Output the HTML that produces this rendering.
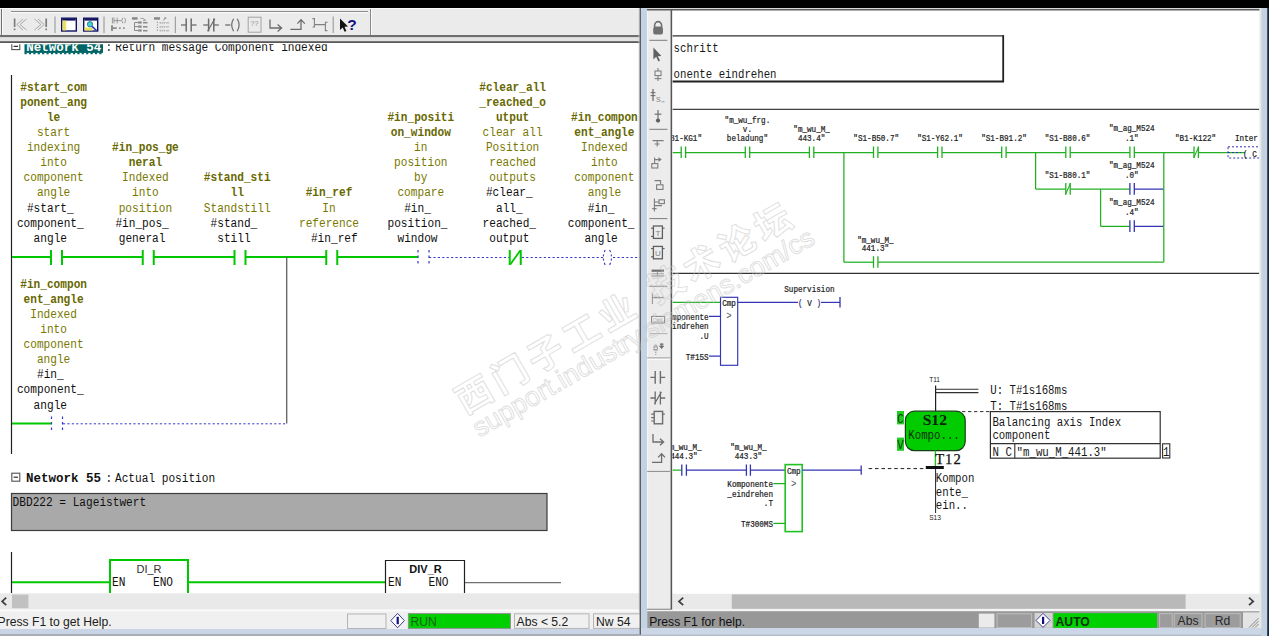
<!DOCTYPE html>
<html lang="en"><head><meta charset="utf-8"><title>STEP 7 monitor</title>
<style>
html,body{margin:0;padding:0;background:#fff;}
body{width:1269px;height:636px;overflow:hidden;}
svg{display:block;}
text{white-space:pre;}
.m11{font-family:"Liberation Mono",monospace;font-size:11.13px;}
.m107{font-family:"Liberation Mono",monospace;font-size:10.73px;}
.m76{font-family:"Liberation Mono",monospace;font-size:7.63px;stroke:#282828;stroke-width:0.2px;}
.m9{font-family:"Liberation Mono",monospace;font-size:9px;}
.b{font-weight:bold;}
.s11{font-family:"Liberation Sans",sans-serif;font-size:11px;}
.s8{font-family:"Liberation Sans",sans-serif;font-size:8px;}
.s9{font-family:"Liberation Sans",sans-serif;font-size:9.5px;}
.s7{font-family:"Liberation Sans",sans-serif;font-size:6.6px;}
.st{font-family:"Liberation Sans",sans-serif;font-size:12.15px;}
.tiny{font-family:"Liberation Sans",sans-serif;font-size:6.4px;}
.tiny2{font-family:"Liberation Sans",sans-serif;font-size:7px;}
.tiny3{font-family:"Liberation Sans",sans-serif;font-size:5.4px;}
.helpq{font-family:"Liberation Sans",sans-serif;font-size:15.5px;font-weight:bold;}
.ser15{font-family:"Liberation Serif",serif;font-size:15.6px;}
.ser14{font-family:"Liberation Serif",serif;font-size:14.6px;}
.wmc{font-family:"Liberation Sans","Noto Sans CJK SC",sans-serif;font-size:36px;font-weight:bold;}
.wml{font-family:"Liberation Sans",sans-serif;font-size:26.9px;}
</style></head>
<body>
<svg width="1269" height="636" viewBox="0 0 1269 636">
<rect x="0" y="0" width="1269" height="8" fill="#000000" />
<rect x="0" y="8" width="640" height="28" fill="#ebebeb" />
<line x1="0" y1="8.5" x2="640" y2="8.5" stroke="#f8f8f8" stroke-width="1" />
<line x1="1.5" y1="9" x2="1.5" y2="35" stroke="#707070" stroke-width="1" />
<line x1="2.5" y1="9" x2="2.5" y2="35" stroke="#fbfbfb" stroke-width="1" />
<line x1="11" y1="11.5" x2="368" y2="11.5" stroke="#8c8c8c" stroke-width="1" />
<line x1="11" y1="12.5" x2="368" y2="12.5" stroke="#fafafa" stroke-width="1" />
<line x1="370.5" y1="9" x2="370.5" y2="35" stroke="#8a8a8a" stroke-width="1" />
<line x1="371.5" y1="9" x2="371.5" y2="35" stroke="#fafafa" stroke-width="1" />
<rect x="0" y="35" width="640" height="2.4" fill="#6e6e6e" />
<rect x="0" y="37.4" width="640" height="3.8" fill="#e2e2e2" />
<rect x="0" y="41.2" width="640" height="1.8" fill="#585858" />
<line x1="14.6" y1="18.5" x2="14.6" y2="27" stroke="#7c7c7c" stroke-width="1.7" />
<line x1="14.6" y1="28.5" x2="14.6" y2="30.2" stroke="#7c7c7c" stroke-width="1.7" />
<line x1="46.2" y1="18.5" x2="46.2" y2="27" stroke="#7c7c7c" stroke-width="1.7" />
<line x1="46.2" y1="28.5" x2="46.2" y2="30.2" stroke="#7c7c7c" stroke-width="1.7" />
<path d="M26.5 19 L20 24.5 L26.5 30 M23 19 L16.8 24.5 L23 30" stroke="#a0a0a0" fill="none" stroke-width="0.9" />
<path d="M34.5 19 L41 24.5 L34.5 30 M38 19 L44.2 24.5 L38 30" stroke="#a0a0a0" fill="none" stroke-width="0.9" />
<line x1="55" y1="16.5" x2="55" y2="33" stroke="#909090" stroke-width="1" />
<rect x="61.7" y="18.2" width="14.6" height="12.8" fill="#ffffff" stroke="#101060" stroke-width="1.4" />
<rect x="62.4" y="18.6" width="13.2" height="2" fill="#101060" />
<rect x="62.6" y="20.6" width="3.6" height="9.8" fill="#e8e060" />
<rect x="83.7" y="18.2" width="14" height="12.8" fill="#ffffff" stroke="#101060" stroke-width="1.4" />
<rect x="84.4" y="18.6" width="12.6" height="2" fill="#101060" />
<rect x="84.6" y="27.6" width="8" height="3" fill="#e8e060" />
<circle cx="90" cy="24.3" r="2.7" fill="#40d0d0" stroke="#306080" stroke-width="0.8"/>
<line x1="92" y1="26.3" x2="96.5" y2="30.5" stroke="#2040c0" stroke-width="1.6" />
<line x1="104" y1="16.5" x2="104" y2="33" stroke="#909090" stroke-width="1" />
<path d="M112.4 17.6 V23.4 M114 17.6 V23.4 M117.2 17.6 V23.4 M114 20.6 H121 M122.8 17.8 Q120.8 20.5 122.8 23.2 M124.6 17.8 Q126.6 20.5 124.6 23.2" stroke="#8e8e8e" fill="none" stroke-width="0.9" />
<line x1="112" y1="25.2" x2="112" y2="31" stroke="#8a8a8a" stroke-width="1.9" />
<line x1="112.6" y1="28.1" x2="116.8" y2="28.1" stroke="#8a8a8a" stroke-width="1.7" />
<rect x="119" y="27.4" width="1.8" height="1.5" fill="#8a8a8a" />
<rect x="123" y="27.4" width="1.8" height="1.5" fill="#8a8a8a" />
<rect x="132" y="17.2" width="5.6" height="2.5" fill="#8a8a8a" />
<path d="M140.4 18.4 H143 L145.6 20.2 M143 20.4 H146" stroke="#9a9a9a" fill="none" stroke-width="0.9" />
<path d="M138 22.5 H134.5 V30.5 H138 M134.5 26.6 H138" stroke="#8a8a8a" fill="none" stroke-width="1" />
<rect x="138.1" y="21.4" width="3.6" height="2.2" fill="#8a8a8a" />
<line x1="143" y1="22.7" x2="147.5" y2="22.7" stroke="#8a8a8a" stroke-width="1.5" />
<rect x="138.1" y="25.5" width="3.6" height="2.2" fill="#8a8a8a" />
<line x1="143" y1="26.8" x2="147.5" y2="26.8" stroke="#8a8a8a" stroke-width="1.5" />
<rect x="138.1" y="29.4" width="3.6" height="2.2" fill="#8a8a8a" />
<line x1="143" y1="30.7" x2="147.5" y2="30.7" stroke="#8a8a8a" stroke-width="1.5" />
<rect x="154" y="17.2" width="6" height="2.5" fill="#8a8a8a" />
<path d="M163.4 20.4 L165.8 17.8 M164 18 H166.4" stroke="#8a8a8a" fill="none" stroke-width="1" />
<line x1="157.4" y1="21.8" x2="157.4" y2="31.4" stroke="#909090" stroke-width="1.1" stroke-dasharray="1.1 1.5" />
<line x1="159.6" y1="22.8" x2="165.4" y2="22.8" stroke="#b0b0b0" stroke-width="1.8" stroke-dasharray="1.3 0.7" />
<path d="M165.6 22.0 L166.8 23.6 L168 22.0 L169 23.6" stroke="#a8a8a8" fill="none" stroke-width="0.8" />
<line x1="159.6" y1="26.8" x2="165.4" y2="26.8" stroke="#b0b0b0" stroke-width="1.8" stroke-dasharray="1.3 0.7" />
<path d="M165.6 26.0 L166.8 27.6 L168 26.0 L169 27.6" stroke="#a8a8a8" fill="none" stroke-width="0.8" />
<line x1="159.6" y1="30.7" x2="165.4" y2="30.7" stroke="#b0b0b0" stroke-width="1.8" stroke-dasharray="1.3 0.7" />
<path d="M165.6 29.9 L166.8 31.5 L168 29.9 L169 31.5" stroke="#a8a8a8" fill="none" stroke-width="0.8" />
<line x1="175.3" y1="16.5" x2="175.3" y2="33" stroke="#909090" stroke-width="1" />
<line x1="181" y1="25" x2="186.2" y2="25" stroke="#6c6c6c" stroke-width="1.3" />
<line x1="186.2" y1="18.6" x2="186.2" y2="31.4" stroke="#6c6c6c" stroke-width="1.5" />
<line x1="191.2" y1="18.6" x2="191.2" y2="31.4" stroke="#6c6c6c" stroke-width="1.5" />
<line x1="191.2" y1="25" x2="196.6" y2="25" stroke="#6c6c6c" stroke-width="1.3" />
<line x1="203.3" y1="25" x2="208.6" y2="25" stroke="#6c6c6c" stroke-width="1.3" />
<line x1="208.6" y1="18.6" x2="208.6" y2="31.4" stroke="#6c6c6c" stroke-width="1.5" />
<line x1="213.8" y1="18.6" x2="213.8" y2="31.4" stroke="#6c6c6c" stroke-width="1.5" />
<line x1="213.8" y1="25" x2="218.8" y2="25" stroke="#6c6c6c" stroke-width="1.3" />
<line x1="207.6" y1="31.2" x2="214.8" y2="18.8" stroke="#6c6c6c" stroke-width="1.2" />
<line x1="225.2" y1="25" x2="230.4" y2="25" stroke="#6c6c6c" stroke-width="1.3" />
<path d="M233.6 18.8 Q229.8 25 233.6 31.2 M237.2 18.8 Q241 25 237.2 31.2" stroke="#6c6c6c" fill="none" stroke-width="1.2" />
<rect x="248.2" y="17.2" width="12.8" height="15" fill="none" stroke="#a4a4a4" stroke-width="1" />
<text x="254.5" y="26" class="tiny2" text-anchor="middle" fill="#909090" >??</text>
<path d="M270 19.4 V28 H281.4 M277.6 24.6 L281.6 28 L277.6 31.4" stroke="#6c6c6c" fill="none" stroke-width="1.3" />
<path d="M290.4 29.4 H301 V20.4 M297.4 23.6 L301 19.6 L304.8 23.6" stroke="#6c6c6c" fill="none" stroke-width="1.3" />
<path d="M312.4 18.6 H314.4 V27 H312.6 M314.4 24.6 H325.4 M327.6 22.2 H325.4 V30.6 H327.4" stroke="#808080" fill="none" stroke-width="1.1" />
<line x1="333.2" y1="16.5" x2="333.2" y2="33" stroke="#909090" stroke-width="1" />
<path d="M340 18.6 V30 L342.7 27.5 L344.6 31.8 L346.4 31 L344.5 26.8 L348 26.6 Z" stroke="none" fill="#101010" stroke-width="1" />
<text x="347.2" y="30" class="helpq" fill="#101080" >?</text>
<rect x="0" y="43" width="640" height="550.5" fill="#ffffff" />
<clipPath id="cl1"><rect x="0" y="44.2" width="640" height="30"/></clipPath>
<g clip-path="url(#cl1)">
<rect x="11.8" y="40.6" width="8" height="9" fill="#ffffff" stroke="#505050" stroke-width="1.1" />
<line x1="13.6" y1="46.4" x2="18" y2="46.4" stroke="#303030" stroke-width="1.2" />
<rect x="24.5" y="40" width="78.5" height="12.9" fill="#006464" />
<line x1="24.5" y1="53.4" x2="103" y2="53.4" stroke="#006464" stroke-width="1.6" stroke-dasharray="2.2 2.2" />
<text transform="translate(26.2,50.9) scale(1,1.16)" class="m11 b" fill="#ffffff" textLength="75" lengthAdjust="spacingAndGlyphs">Network 54</text>
<text transform="translate(105.6,50.9) scale(1,1.16)" class="m11" fill="#101010" >:</text>
<text transform="translate(115.3,50.9) scale(1,1.16)" class="m11" fill="#101010" textLength="212.4">Return message Component indexed</text>
</g>
<line x1="11.5" y1="75" x2="11.5" y2="454" stroke="#202020" stroke-width="1.2" />
<text transform="translate(53.6,90.6) scale(1,1.16)" class="m11 b" text-anchor="middle" fill="#686800" >#start_com</text>
<text transform="translate(53.6,105.7) scale(1,1.16)" class="m11 b" text-anchor="middle" fill="#686800" >ponent_ang</text>
<text transform="translate(53.6,120.8) scale(1,1.16)" class="m11 b" text-anchor="middle" fill="#686800" >le</text>
<text transform="translate(53.6,135.9) scale(1,1.16)" class="m11" text-anchor="middle" fill="#787800" >start</text>
<text transform="translate(53.6,151.0) scale(1,1.16)" class="m11" text-anchor="middle" fill="#787800" >indexing</text>
<text transform="translate(53.6,166.1) scale(1,1.16)" class="m11" text-anchor="middle" fill="#787800" >into</text>
<text transform="translate(53.6,181.3) scale(1,1.16)" class="m11" text-anchor="middle" fill="#787800" >component</text>
<text transform="translate(53.6,196.4) scale(1,1.16)" class="m11" text-anchor="middle" fill="#787800" >angle</text>
<text transform="translate(50.3,211.5) scale(1,1.16)" class="m11" text-anchor="middle" fill="#101010" >#start_</text>
<text transform="translate(50.3,226.6) scale(1,1.16)" class="m11" text-anchor="middle" fill="#101010" >component_</text>
<text transform="translate(50.3,241.7) scale(1,1.16)" class="m11" text-anchor="middle" fill="#101010" >angle</text>
<text transform="translate(145.4,151.0) scale(1,1.16)" class="m11 b" text-anchor="middle" fill="#686800" >#in_pos_ge</text>
<text transform="translate(145.4,166.1) scale(1,1.16)" class="m11 b" text-anchor="middle" fill="#686800" >neral</text>
<text transform="translate(145.4,181.3) scale(1,1.16)" class="m11" text-anchor="middle" fill="#787800" >Indexed</text>
<text transform="translate(145.4,196.4) scale(1,1.16)" class="m11" text-anchor="middle" fill="#787800" >into</text>
<text transform="translate(145.4,211.5) scale(1,1.16)" class="m11" text-anchor="middle" fill="#787800" >position</text>
<text transform="translate(142.1,226.6) scale(1,1.16)" class="m11" text-anchor="middle" fill="#101010" >#in_pos_</text>
<text transform="translate(142.1,241.7) scale(1,1.16)" class="m11" text-anchor="middle" fill="#101010" >general</text>
<text transform="translate(237.2,181.3) scale(1,1.16)" class="m11 b" text-anchor="middle" fill="#686800" >#stand_sti</text>
<text transform="translate(237.2,196.4) scale(1,1.16)" class="m11 b" text-anchor="middle" fill="#686800" >ll</text>
<text transform="translate(237.2,211.5) scale(1,1.16)" class="m11" text-anchor="middle" fill="#787800" >Standstill</text>
<text transform="translate(233.9,226.6) scale(1,1.16)" class="m11" text-anchor="middle" fill="#101010" >#stand_</text>
<text transform="translate(233.9,241.7) scale(1,1.16)" class="m11" text-anchor="middle" fill="#101010" >still</text>
<text transform="translate(329.0,196.4) scale(1,1.16)" class="m11 b" text-anchor="middle" fill="#686800" >#in_ref</text>
<text transform="translate(329.0,211.5) scale(1,1.16)" class="m11" text-anchor="middle" fill="#787800" >In</text>
<text transform="translate(329.0,226.6) scale(1,1.16)" class="m11" text-anchor="middle" fill="#787800" >reference</text>
<text transform="translate(420.8,120.8) scale(1,1.16)" class="m11 b" text-anchor="middle" fill="#686800" >#in_positi</text>
<text transform="translate(420.8,135.9) scale(1,1.16)" class="m11 b" text-anchor="middle" fill="#686800" >on_window</text>
<text transform="translate(420.8,151.0) scale(1,1.16)" class="m11" text-anchor="middle" fill="#787800" >in</text>
<text transform="translate(420.8,166.1) scale(1,1.16)" class="m11" text-anchor="middle" fill="#787800" >position</text>
<text transform="translate(420.8,181.3) scale(1,1.16)" class="m11" text-anchor="middle" fill="#787800" >by</text>
<text transform="translate(420.8,196.4) scale(1,1.16)" class="m11" text-anchor="middle" fill="#787800" >compare</text>
<text transform="translate(417.5,211.5) scale(1,1.16)" class="m11" text-anchor="middle" fill="#101010" >#in_</text>
<text transform="translate(417.5,226.6) scale(1,1.16)" class="m11" text-anchor="middle" fill="#101010" >position_</text>
<text transform="translate(417.5,241.7) scale(1,1.16)" class="m11" text-anchor="middle" fill="#101010" >window</text>
<text transform="translate(512.6,90.6) scale(1,1.16)" class="m11 b" text-anchor="middle" fill="#686800" >#clear_all</text>
<text transform="translate(512.6,105.7) scale(1,1.16)" class="m11 b" text-anchor="middle" fill="#686800" >_reached_o</text>
<text transform="translate(512.6,120.8) scale(1,1.16)" class="m11 b" text-anchor="middle" fill="#686800" >utput</text>
<text transform="translate(512.6,135.9) scale(1,1.16)" class="m11" text-anchor="middle" fill="#787800" >clear all</text>
<text transform="translate(512.6,151.0) scale(1,1.16)" class="m11" text-anchor="middle" fill="#787800" >Position</text>
<text transform="translate(512.6,166.1) scale(1,1.16)" class="m11" text-anchor="middle" fill="#787800" >reached</text>
<text transform="translate(512.6,181.3) scale(1,1.16)" class="m11" text-anchor="middle" fill="#787800" >outputs</text>
<text transform="translate(509.3,196.4) scale(1,1.16)" class="m11" text-anchor="middle" fill="#101010" >#clear_</text>
<text transform="translate(509.3,211.5) scale(1,1.16)" class="m11" text-anchor="middle" fill="#101010" >all_</text>
<text transform="translate(509.3,226.6) scale(1,1.16)" class="m11" text-anchor="middle" fill="#101010" >reached_</text>
<text transform="translate(509.3,241.7) scale(1,1.16)" class="m11" text-anchor="middle" fill="#101010" >output</text>
<text transform="translate(604.4,120.8) scale(1,1.16)" class="m11 b" text-anchor="middle" fill="#686800" >#in_compon</text>
<text transform="translate(604.4,135.9) scale(1,1.16)" class="m11 b" text-anchor="middle" fill="#686800" >ent_angle</text>
<text transform="translate(604.4,151.0) scale(1,1.16)" class="m11" text-anchor="middle" fill="#787800" >Indexed</text>
<text transform="translate(604.4,166.1) scale(1,1.16)" class="m11" text-anchor="middle" fill="#787800" >into</text>
<text transform="translate(604.4,181.3) scale(1,1.16)" class="m11" text-anchor="middle" fill="#787800" >component</text>
<text transform="translate(604.4,196.4) scale(1,1.16)" class="m11" text-anchor="middle" fill="#787800" >angle</text>
<text transform="translate(601.1,211.5) scale(1,1.16)" class="m11" text-anchor="middle" fill="#101010" >#in_</text>
<text transform="translate(601.1,226.6) scale(1,1.16)" class="m11" text-anchor="middle" fill="#101010" >component_</text>
<text transform="translate(601.1,241.7) scale(1,1.16)" class="m11" text-anchor="middle" fill="#101010" >angle</text>
<text transform="translate(334.3,241.7) scale(1,1.16)" class="m11" text-anchor="middle" fill="#101010" >#in_ref</text>
<text transform="translate(53.6,287.6) scale(1,1.16)" class="m11 b" text-anchor="middle" fill="#686800" >#in_compon</text>
<text transform="translate(53.6,302.7) scale(1,1.16)" class="m11 b" text-anchor="middle" fill="#686800" >ent_angle</text>
<text transform="translate(53.6,317.8) scale(1,1.16)" class="m11" text-anchor="middle" fill="#787800" >Indexed</text>
<text transform="translate(53.6,333.0) scale(1,1.16)" class="m11" text-anchor="middle" fill="#787800" >into</text>
<text transform="translate(53.6,348.1) scale(1,1.16)" class="m11" text-anchor="middle" fill="#787800" >component</text>
<text transform="translate(53.6,363.2) scale(1,1.16)" class="m11" text-anchor="middle" fill="#787800" >angle</text>
<text transform="translate(50.3,378.3) scale(1,1.16)" class="m11" text-anchor="middle" fill="#101010" >#in_</text>
<text transform="translate(50.3,393.4) scale(1,1.16)" class="m11" text-anchor="middle" fill="#101010" >component_</text>
<text transform="translate(50.3,408.6) scale(1,1.16)" class="m11" text-anchor="middle" fill="#101010" >angle</text>
<line x1="12" y1="257" x2="51.0" y2="257" stroke="#00c800" stroke-width="2" />
<line x1="51.0" y1="250" x2="51.0" y2="265" stroke="#00c800" stroke-width="2" />
<line x1="62.0" y1="250" x2="62.0" y2="265" stroke="#00c800" stroke-width="2" />
<line x1="62.0" y1="257" x2="142.75" y2="257" stroke="#00c800" stroke-width="2" />
<line x1="142.75" y1="250" x2="142.75" y2="265" stroke="#00c800" stroke-width="2" />
<line x1="153.75" y1="250" x2="153.75" y2="265" stroke="#00c800" stroke-width="2" />
<line x1="153.75" y1="257" x2="234.5" y2="257" stroke="#00c800" stroke-width="2" />
<line x1="234.5" y1="250" x2="234.5" y2="265" stroke="#00c800" stroke-width="2" />
<line x1="245.5" y1="250" x2="245.5" y2="265" stroke="#00c800" stroke-width="2" />
<line x1="245.5" y1="257" x2="326.25" y2="257" stroke="#00c800" stroke-width="2" />
<line x1="326.25" y1="250" x2="326.25" y2="265" stroke="#00c800" stroke-width="2" />
<line x1="337.25" y1="250" x2="337.25" y2="265" stroke="#00c800" stroke-width="2" />
<line x1="337.25" y1="257" x2="418.0" y2="257" stroke="#00c800" stroke-width="2" />
<line x1="286.7" y1="257" x2="286.7" y2="423.5" stroke="#606060" stroke-width="1.3" />
<line x1="418.0" y1="250" x2="418.0" y2="265" stroke="#3838c8" stroke-width="1.2" stroke-dasharray="2.5 3" />
<line x1="429.0" y1="250" x2="429.0" y2="265" stroke="#3838c8" stroke-width="1.2" stroke-dasharray="2.5 3" />
<line x1="429.0" y1="257.5" x2="509.75" y2="257.5" stroke="#3838c8" stroke-width="1" stroke-dasharray="2.2 2.2" />
<line x1="509.75" y1="250" x2="509.75" y2="265" stroke="#00c800" stroke-width="2" />
<line x1="520.75" y1="250" x2="520.75" y2="265" stroke="#00c800" stroke-width="2" />
<line x1="510.25" y1="264.5" x2="520.25" y2="250.5" stroke="#00c800" stroke-width="1.8" />
<line x1="521.75" y1="257.5" x2="603.0" y2="257.5" stroke="#3838c8" stroke-width="1" stroke-dasharray="2.2 2.2" />
<path d="M605.2 250 Q601.4 257.5 605.2 265 M609.6 250 Q613.4 257.5 609.6 265" stroke="#3838c8" fill="none" stroke-width="1.1" stroke-dasharray="2.2 2.2"/>
<line x1="613.0" y1="257.5" x2="640" y2="257.5" stroke="#3838c8" stroke-width="1" stroke-dasharray="2.2 2.2" />
<line x1="12" y1="423.5" x2="51" y2="423.5" stroke="#00c800" stroke-width="2" />
<line x1="51.5" y1="416.5" x2="51.5" y2="431.5" stroke="#3838c8" stroke-width="1.2" stroke-dasharray="2.5 3" />
<line x1="62.5" y1="416.5" x2="62.5" y2="431.5" stroke="#3838c8" stroke-width="1.2" stroke-dasharray="2.5 3" />
<line x1="63" y1="423.8" x2="286.5" y2="423.8" stroke="#3838c8" stroke-width="1" stroke-dasharray="2.2 2.2" />
<rect x="11.8" y="473.2" width="8" height="8" fill="#ffffff" stroke="#505050" stroke-width="1.1" />
<line x1="13.6" y1="477.2" x2="18" y2="477.2" stroke="#303030" stroke-width="1.2" />
<text transform="translate(26,481.7) scale(1,1.16)" class="m11 b" fill="#101010" textLength="75" lengthAdjust="spacingAndGlyphs">Network 55</text>
<text transform="translate(105.5,481.7) scale(1,1.16)" class="m11" fill="#101010" >:</text>
<text transform="translate(115,481.7) scale(1,1.16)" class="m11" fill="#101010" >Actual position</text>
<rect x="11.5" y="493.5" width="535.5" height="37" fill="#a9a9a9" stroke="#3c3c3c" stroke-width="1.2" />
<text transform="translate(12.6,506.3) scale(1,1.16)" class="m11" fill="#101010" >DBD222 = Lageistwert</text>
<line x1="11.5" y1="552" x2="11.5" y2="593" stroke="#202020" stroke-width="1.2" />
<line x1="12" y1="582.3" x2="109" y2="582.3" stroke="#00c800" stroke-width="2" />
<path d="M110 593 V560 H188 V593" stroke="#00c800" fill="none" stroke-width="2" />
<line x1="189" y1="582.3" x2="385" y2="582.3" stroke="#00c800" stroke-width="2" />
<text x="149" y="573" class="s11" text-anchor="middle" fill="#303030" >DI_R</text>
<text transform="translate(112,585.7) scale(1,1.16)" class="m11" fill="#101010" >EN</text>
<text transform="translate(153,585.7) scale(1,1.16)" class="m11" fill="#101010" >ENO</text>
<path d="M385.5 593 V560.5 H464.5 V593" stroke="#202020" fill="none" stroke-width="1.2" />
<text x="425.5" y="573" class="s11 b" text-anchor="middle" fill="#101010" >DIV_R</text>
<text transform="translate(388,585.7) scale(1,1.16)" class="m11" fill="#101010" >EN</text>
<text transform="translate(428.5,585.7) scale(1,1.16)" class="m11" fill="#101010" >ENO</text>
<line x1="465" y1="582.5999999999999" x2="561" y2="582.5999999999999" stroke="#707070" stroke-width="1.3" />
<rect x="0" y="593.3" width="640" height="16.4" fill="#e9e9e9" />
<rect x="12" y="594.6" width="16.4" height="13.6" fill="#c1c1c1" />
<path d="M6.2 597.6 L2.2 601.4 L6.2 605.2" stroke="#404040" fill="none" stroke-width="1.8" />
<rect x="0" y="609.6" width="640" height="1.6" fill="#fbfbfb" />
<rect x="0" y="611.2" width="640" height="18" fill="#f0f0f0" />
<text x="-2.4" y="625.6" class="st" fill="#202020" >Press F1 to get Help.</text>
<rect x="347.5" y="614" width="38.5" height="14.5" fill="#f0f0f0" stroke="#b4b4b4" stroke-width="1" />
<path d="M397.6 613.4 L404.4 620.6 L397.6 627.8 L390.8 620.6 Z" stroke="#404090" fill="#ffffff" stroke-width="1" />
<rect x="396.6" y="616.8" width="2.2" height="7.4" fill="#101080" />
<rect x="408.4" y="613.6" width="102" height="14.8" fill="#00d000" stroke="#909090" stroke-width="1" />
<text x="410.4" y="625.8" class="st" fill="#106010" >RUN</text>
<rect x="514.5" y="613.8" width="74.5" height="14.6" fill="#f0f0f0" stroke="#b4b4b4" stroke-width="1" />
<text x="516.6" y="625.6" class="st" fill="#202020" >Abs &lt; 5.2</text>
<rect x="593.5" y="613.8" width="48" height="14.6" fill="#f0f0f0" stroke="#b4b4b4" stroke-width="1" />
<text x="596" y="625.6" class="st" fill="#202020" >Nw 54</text>
<rect x="0" y="629" width="640" height="5" fill="#c9d5e6" />
<rect x="0" y="634" width="640" height="2" fill="#a9adb4" />
<rect x="638.6" y="8" width="1" height="603" fill="#d8d8d8" />
<rect x="639.6" y="8" width="1.4" height="628" fill="#5e5e5e" />
<rect x="641" y="8" width="6.2" height="628" fill="#c3d3e6" />
<rect x="647.2" y="9" width="23.6" height="601" fill="#ececec" />
<line x1="647.7" y1="9" x2="647.7" y2="610" stroke="#f8f8f8" stroke-width="1" />
<rect x="670.6" y="9" width="1.8" height="601" fill="#555555" />
<rect x="672.4" y="10.4" width="587" height="583.4" fill="#ffffff" />
<line x1="647" y1="8.5" x2="1260" y2="8.5" stroke="#d8d8d8" stroke-width="1" />
<rect x="647" y="9" width="613" height="1.5" fill="#5c5c5c" />
<clipPath id="clr"><rect x="672.4" y="10" width="587" height="584"/></clipPath>
<g clip-path="url(#clr)">
<rect x="673" y="36.2" width="330" height="44.6" fill="#ffffff" />
<line x1="672.4" y1="35.8" x2="1003.5" y2="35.8" stroke="#303030" stroke-width="1.3" />
<line x1="672.4" y1="81.4" x2="1004" y2="81.4" stroke="#202020" stroke-width="2" />
<line x1="1003.2" y1="35.2" x2="1003.2" y2="82" stroke="#202020" stroke-width="1.8" />
<text transform="translate(673.6,51.9) scale(1,1.2)" class="m107" fill="#181818" >schritt</text>
<text transform="translate(673.6,78.3) scale(1,1.2)" class="m107" fill="#181818" >onente eindrehen</text>
<line x1="672.4" y1="109.4" x2="1259.4" y2="109.4" stroke="#404040" stroke-width="1.2" />
<line x1="672.4" y1="273.4" x2="1259.4" y2="273.4" stroke="#303030" stroke-width="1.4" />
<line x1="672.4" y1="152.5" x2="681.1999999999999" y2="152.5" stroke="#22b022" stroke-width="1.25" />
<line x1="681.1999999999999" y1="146.5" x2="681.1999999999999" y2="158.1" stroke="#22b022" stroke-width="1.3" />
<line x1="685.6" y1="146.5" x2="685.6" y2="158.1" stroke="#22b022" stroke-width="1.3" />
<line x1="685.6" y1="152.5" x2="745.3" y2="152.5" stroke="#22b022" stroke-width="1.25" />
<line x1="745.3" y1="146.5" x2="745.3" y2="158.1" stroke="#22b022" stroke-width="1.3" />
<line x1="749.7" y1="146.5" x2="749.7" y2="158.1" stroke="#22b022" stroke-width="1.3" />
<line x1="749.7" y1="152.5" x2="809.3999999999999" y2="152.5" stroke="#22b022" stroke-width="1.25" />
<line x1="809.3999999999999" y1="146.5" x2="809.3999999999999" y2="158.1" stroke="#22b022" stroke-width="1.3" />
<line x1="813.8" y1="146.5" x2="813.8" y2="158.1" stroke="#22b022" stroke-width="1.3" />
<line x1="813.8" y1="152.5" x2="873.4999999999999" y2="152.5" stroke="#22b022" stroke-width="1.25" />
<line x1="873.4999999999999" y1="146.5" x2="873.4999999999999" y2="158.1" stroke="#22b022" stroke-width="1.3" />
<line x1="877.9" y1="146.5" x2="877.9" y2="158.1" stroke="#22b022" stroke-width="1.3" />
<line x1="877.9" y1="152.5" x2="937.5999999999999" y2="152.5" stroke="#22b022" stroke-width="1.25" />
<line x1="937.5999999999999" y1="146.5" x2="937.5999999999999" y2="158.1" stroke="#22b022" stroke-width="1.3" />
<line x1="942.0" y1="146.5" x2="942.0" y2="158.1" stroke="#22b022" stroke-width="1.3" />
<line x1="942.0" y1="152.5" x2="1001.6999999999999" y2="152.5" stroke="#22b022" stroke-width="1.25" />
<line x1="1001.6999999999999" y1="146.5" x2="1001.6999999999999" y2="158.1" stroke="#22b022" stroke-width="1.3" />
<line x1="1006.1" y1="146.5" x2="1006.1" y2="158.1" stroke="#22b022" stroke-width="1.3" />
<line x1="1006.1" y1="152.5" x2="1065.8" y2="152.5" stroke="#22b022" stroke-width="1.25" />
<line x1="1065.8" y1="146.5" x2="1065.8" y2="158.1" stroke="#22b022" stroke-width="1.3" />
<line x1="1070.2" y1="146.5" x2="1070.2" y2="158.1" stroke="#22b022" stroke-width="1.3" />
<line x1="1070.2" y1="152.5" x2="1129.8999999999999" y2="152.5" stroke="#22b022" stroke-width="1.25" />
<line x1="1129.8999999999999" y1="146.5" x2="1129.8999999999999" y2="158.1" stroke="#22b022" stroke-width="1.3" />
<line x1="1134.3" y1="146.5" x2="1134.3" y2="158.1" stroke="#22b022" stroke-width="1.3" />
<line x1="1134.3" y1="152.5" x2="1193.9999999999998" y2="152.5" stroke="#22b022" stroke-width="1.25" />
<line x1="1193.9999999999998" y1="146.5" x2="1193.9999999999998" y2="158.1" stroke="#22b022" stroke-width="1.3" />
<line x1="1198.3999999999999" y1="146.5" x2="1198.3999999999999" y2="158.1" stroke="#22b022" stroke-width="1.3" />
<line x1="1193.6" y1="157.9" x2="1198.7999999999997" y2="146.7" stroke="#22b022" stroke-width="1.1" />
<line x1="1198.3999999999999" y1="152.5" x2="1245" y2="152.5" stroke="#22b022" stroke-width="1.25" />
<line x1="843.9" y1="152.5" x2="843.9" y2="262.2" stroke="#22b022" stroke-width="1.25" />
<line x1="843.9" y1="262.2" x2="873.4999999999999" y2="262.2" stroke="#22b022" stroke-width="1.25" />
<line x1="873.4999999999999" y1="256.2" x2="873.4999999999999" y2="267.8" stroke="#22b022" stroke-width="1.3" />
<line x1="877.9" y1="256.2" x2="877.9" y2="267.8" stroke="#22b022" stroke-width="1.3" />
<line x1="877.9" y1="262.2" x2="1163.8" y2="262.2" stroke="#22b022" stroke-width="1.25" />
<line x1="1163.8" y1="152.5" x2="1163.8" y2="262.2" stroke="#22b022" stroke-width="1.25" />
<line x1="1035.6" y1="152.5" x2="1035.6" y2="189.1" stroke="#22b022" stroke-width="1.25" />
<line x1="1035.6" y1="189.1" x2="1065.8" y2="189.1" stroke="#22b022" stroke-width="1.25" />
<line x1="1065.8" y1="183.1" x2="1065.8" y2="194.7" stroke="#22b022" stroke-width="1.3" />
<line x1="1070.2" y1="183.1" x2="1070.2" y2="194.7" stroke="#22b022" stroke-width="1.3" />
<line x1="1065.4" y1="194.5" x2="1070.6" y2="183.29999999999998" stroke="#22b022" stroke-width="1.1" />
<line x1="1070.2" y1="189.1" x2="1129.8999999999999" y2="189.1" stroke="#22b022" stroke-width="1.25" />
<line x1="1129.8999999999999" y1="183.1" x2="1129.8999999999999" y2="194.7" stroke="#3434b4" stroke-width="1.3" />
<line x1="1134.3" y1="183.1" x2="1134.3" y2="194.7" stroke="#3434b4" stroke-width="1.3" />
<line x1="1134.3" y1="189.1" x2="1163.2" y2="189.1" stroke="#3434b4" stroke-width="1.25" />
<line x1="1100.6" y1="189.1" x2="1100.6" y2="226.3" stroke="#22b022" stroke-width="1.25" />
<line x1="1100.6" y1="226.3" x2="1129.8999999999999" y2="226.3" stroke="#22b022" stroke-width="1.25" />
<line x1="1129.8999999999999" y1="220.3" x2="1129.8999999999999" y2="231.9" stroke="#3434b4" stroke-width="1.3" />
<line x1="1134.3" y1="220.3" x2="1134.3" y2="231.9" stroke="#3434b4" stroke-width="1.3" />
<line x1="1134.3" y1="226.3" x2="1163.2" y2="226.3" stroke="#3434b4" stroke-width="1.25" />
<rect x="1228" y="146.8" width="34" height="11.2" fill="none" stroke="#3434b4" stroke-width="1" stroke-dasharray="2 2"/>
<line x1="1228" y1="152.5" x2="1241" y2="152.5" stroke="#3434b4" stroke-width="1" stroke-dasharray="2 2" />
<text transform="translate(1243,156.7) scale(1,1.2)" class="m76" fill="#181818" >( C</text>
<text transform="translate(1235,140.7) scale(1,1.2)" class="m76" fill="#181818" >Inter</text>
<text transform="translate(702,140.7) scale(1,1.2)" class="m76" text-anchor="end" fill="#181818" >"B1-KG1"</text>
<text transform="translate(747.4,122.5) scale(1,1.2)" class="m76" text-anchor="middle" fill="#181818" >"m_wu_frg.</text>
<text transform="translate(747.4,131.6) scale(1,1.2)" class="m76" text-anchor="middle" fill="#181818" >v.</text>
<text transform="translate(747.4,140.7) scale(1,1.2)" class="m76" text-anchor="middle" fill="#181818" >beladung"</text>
<text transform="translate(811.6,131.6) scale(1,1.2)" class="m76" text-anchor="middle" fill="#181818" >"m_wu_M_</text>
<text transform="translate(811.6,140.7) scale(1,1.2)" class="m76" text-anchor="middle" fill="#181818" >443.4"</text>
<text transform="translate(876.2,140.7) scale(1,1.2)" class="m76" text-anchor="middle" fill="#181818" >"S1-B50.7"</text>
<text transform="translate(940,140.7) scale(1,1.2)" class="m76" text-anchor="middle" fill="#181818" >"S1-Y62.1"</text>
<text transform="translate(1004,140.7) scale(1,1.2)" class="m76" text-anchor="middle" fill="#181818" >"S1-B91.2"</text>
<text transform="translate(1067.6,140.7) scale(1,1.2)" class="m76" text-anchor="middle" fill="#181818" >"S1-B80.6"</text>
<text transform="translate(1131.8,131.1) scale(1,1.2)" class="m76" text-anchor="middle" fill="#181818" >"m_ag_M524</text>
<text transform="translate(1131.8,140.7) scale(1,1.2)" class="m76" text-anchor="middle" fill="#181818" >.1"</text>
<text transform="translate(1195.6,140.7) scale(1,1.2)" class="m76" text-anchor="middle" fill="#181818" >"B1-K122"</text>
<text transform="translate(1067.6,177.5) scale(1,1.2)" class="m76" text-anchor="middle" fill="#181818" >"S1-B80.1"</text>
<text transform="translate(1131.8,168.3) scale(1,1.2)" class="m76" text-anchor="middle" fill="#181818" >"m_ag_M524</text>
<text transform="translate(1131.8,177.5) scale(1,1.2)" class="m76" text-anchor="middle" fill="#181818" >.0"</text>
<text transform="translate(1131.8,205.3) scale(1,1.2)" class="m76" text-anchor="middle" fill="#181818" >"m_ag_M524</text>
<text transform="translate(1131.8,214.5) scale(1,1.2)" class="m76" text-anchor="middle" fill="#181818" >.4"</text>
<text transform="translate(875.4,242.5) scale(1,1.2)" class="m76" text-anchor="middle" fill="#181818" >"m_wu_M_</text>
<text transform="translate(875.4,251.1) scale(1,1.2)" class="m76" text-anchor="middle" fill="#181818" >441.3"</text>
<line x1="672.4" y1="302.4" x2="720.4" y2="302.4" stroke="#22b022" stroke-width="1.3" />
<rect x="720.5" y="297.3" width="17.2" height="68" fill="#ffffff" stroke="#3434b4" stroke-width="1.15" />
<text transform="translate(729,306.1) scale(1,1.2)" class="m76" text-anchor="middle" fill="#181818" >Cmp</text>
<text transform="translate(729,318.8) scale(1,1.2)" class="m9" text-anchor="middle" fill="#505050" >&gt;</text>
<line x1="737.8" y1="302.4" x2="798" y2="302.4" stroke="#3434b4" stroke-width="1.2" />
<text transform="translate(800.4,305.9) scale(1,1.2)" class="m76" text-anchor="middle" fill="#3434b4" >(</text>
<text transform="translate(809.6,305.9) scale(1,1.2)" class="m76" text-anchor="middle" fill="#181818" >V</text>
<text transform="translate(818.8,305.9) scale(1,1.2)" class="m76" text-anchor="middle" fill="#3434b4" >)</text>
<line x1="821" y1="302.4" x2="840" y2="302.4" stroke="#3434b4" stroke-width="1.2" />
<line x1="840" y1="297" x2="840" y2="307.6" stroke="#3434b4" stroke-width="1.3" />
<text transform="translate(809.4,292.3) scale(1,1.2)" class="m76" text-anchor="middle" fill="#181818" >Supervision</text>
<text transform="translate(708.6,319.9) scale(1,1.2)" class="m76" text-anchor="end" fill="#181818" >mponente</text>
<text transform="translate(708.6,329.3) scale(1,1.2)" class="m76" text-anchor="end" fill="#181818" >eindrehen</text>
<text transform="translate(708.6,338.7) scale(1,1.2)" class="m76" text-anchor="end" fill="#181818" >.U</text>
<text transform="translate(708.6,359.5) scale(1,1.2)" class="m76" text-anchor="end" fill="#181818" >T#15S</text>
<line x1="709" y1="316.4" x2="720.4" y2="316.4" stroke="#3434b4" stroke-width="1.2" />
<line x1="709" y1="356.2" x2="720.4" y2="356.2" stroke="#3434b4" stroke-width="1.2" />
<line x1="672.4" y1="470.1" x2="681.6" y2="470.1" stroke="#22b022" stroke-width="1.3" />
<line x1="681.8" y1="464.4" x2="681.8" y2="475.8" stroke="#3434b4" stroke-width="1.3" />
<line x1="686.4" y1="464.4" x2="686.4" y2="475.8" stroke="#3434b4" stroke-width="1.3" />
<line x1="686.4" y1="470.1" x2="746.4" y2="470.1" stroke="#3434b4" stroke-width="1.2" />
<line x1="746.4" y1="464.4" x2="746.4" y2="475.8" stroke="#3434b4" stroke-width="1.3" />
<line x1="750.4" y1="464.4" x2="750.4" y2="475.8" stroke="#3434b4" stroke-width="1.3" />
<line x1="750.4" y1="470.1" x2="785" y2="470.1" stroke="#3434b4" stroke-width="1.2" />
<rect x="785.2" y="464.6" width="17" height="67" fill="#ffffff" stroke="#22c022" stroke-width="1.6" />
<text transform="translate(793.8,473.9) scale(1,1.2)" class="m76" text-anchor="middle" fill="#181818" >Cmp</text>
<text transform="translate(793.8,486.6) scale(1,1.2)" class="m9" text-anchor="middle" fill="#505050" >&gt;</text>
<line x1="802.4" y1="470.1" x2="861.2" y2="470.1" stroke="#3434b4" stroke-width="1.2" />
<line x1="861.2" y1="465.4" x2="861.2" y2="474.8" stroke="#3434b4" stroke-width="1.3" />
<line x1="868.6" y1="468.6" x2="925" y2="468.6" stroke="#202020" stroke-width="1" stroke-dasharray="3.6 2.8" />
<text transform="translate(701.6,449.9) scale(1,1.2)" class="m76" text-anchor="end" fill="#181818" >m_wu_M_</text>
<text transform="translate(670.2,458.9) scale(1,1.2)" class="m76" fill="#181818" >444.3"</text>
<text transform="translate(748.4,449.9) scale(1,1.2)" class="m76" text-anchor="middle" fill="#181818" >"m_wu_M_</text>
<text transform="translate(748.4,458.9) scale(1,1.2)" class="m76" text-anchor="middle" fill="#181818" >443.3"</text>
<text transform="translate(773,487.3) scale(1,1.2)" class="m76" text-anchor="end" fill="#181818" >Komponente</text>
<text transform="translate(773,496.7) scale(1,1.2)" class="m76" text-anchor="end" fill="#181818" >_eindrehen</text>
<text transform="translate(773,506.1) scale(1,1.2)" class="m76" text-anchor="end" fill="#181818" >.T</text>
<text transform="translate(773,526.9) scale(1,1.2)" class="m76" text-anchor="end" fill="#181818" >T#300MS</text>
<line x1="773.4" y1="483.6" x2="785" y2="483.6" stroke="#22b022" stroke-width="1.3" />
<line x1="773.4" y1="523.4" x2="785" y2="523.4" stroke="#22b022" stroke-width="1.3" />
<text x="934.6" y="381.8" class="s7" text-anchor="middle" fill="#202020" >T11</text>
<line x1="935.6" y1="385.6" x2="935.6" y2="412" stroke="#202020" stroke-width="1.2" />
<line x1="935.6" y1="389.3" x2="978.4" y2="389.3" stroke="#303030" stroke-width="1.1" />
<line x1="935.6" y1="392.6" x2="978.4" y2="392.6" stroke="#303030" stroke-width="1.1" />
<text transform="translate(990.2,393.9) scale(1,1.2)" class="m107" fill="#181818" >U: T#1s168ms</text>
<text transform="translate(990.2,409.5) scale(1,1.2)" class="m107" fill="#181818" >T: T#1s168ms</text>
<line x1="956" y1="411.6" x2="990" y2="411.6" stroke="#303030" stroke-width="1" stroke-dasharray="3.4 2.6" />
<rect x="905.4" y="411.2" width="59.8" height="39.4" fill="#00cc00" stroke="#184018" stroke-width="1.2" rx="9" />
<text x="934.8" y="425.4" class="ser15 b" text-anchor="middle" fill="#0c200c" >S12</text>
<text transform="translate(934,438.5) scale(1,1.2)" class="m107" text-anchor="middle" fill="#103010" >Kompo...</text>
<rect x="897" y="411" width="7" height="13.4" fill="#22cc22" />
<text transform="translate(900.4,422.5) scale(1,1.2)" class="m107" text-anchor="middle" fill="#104010" >C</text>
<rect x="897" y="437.6" width="7" height="13.2" fill="#22cc22" />
<text transform="translate(900.4,448.5) scale(1,1.2)" class="m107" text-anchor="middle" fill="#104010" >V</text>
<line x1="935.4" y1="450.6" x2="935.4" y2="466" stroke="#22c022" stroke-width="1.4" />
<line x1="935.6" y1="468" x2="935.6" y2="513" stroke="#202020" stroke-width="1" />
<rect x="925.8" y="466" width="18" height="3" fill="#101010" />
<text x="935.2" y="464" class="ser14" fill="#101010" letter-spacing="1" stroke="#101010" stroke-width="0.25">T12</text>
<text transform="translate(935.8,481.7) scale(1,1.2)" class="m107" fill="#181818" >Kompon</text>
<text transform="translate(935.8,495.5) scale(1,1.2)" class="m107" fill="#181818" >ente_</text>
<text transform="translate(935.8,509.1) scale(1,1.2)" class="m107" fill="#181818" >ein..</text>
<text x="935" y="519.6" class="s7" text-anchor="middle" fill="#202020" >S13</text>
<rect x="990.4" y="411.6" width="169.8" height="46.6" fill="#ffffff" stroke="#303030" stroke-width="1.2" />
<line x1="990.4" y1="443.6" x2="1160.2" y2="443.6" stroke="#303030" stroke-width="1.1" />
<line x1="1014.8" y1="443.6" x2="1014.8" y2="458.2" stroke="#303030" stroke-width="1.1" />
<text transform="translate(992.4,425.7) scale(1,1.2)" class="m107" fill="#181818" >Balancing axis Index</text>
<text transform="translate(992.4,439.3) scale(1,1.2)" class="m107" fill="#181818" >component</text>
<text transform="translate(992.6,455.5) scale(1,1.2)" class="m107" fill="#181818" >N C</text>
<text transform="translate(1016.6,455.5) scale(1,1.2)" class="m107" fill="#181818" >"m_wu_M_441.3"</text>
<rect x="1162.6" y="443.8" width="7.2" height="14.2" fill="#ffffff" stroke="#303030" stroke-width="1.1" />
<text transform="translate(1166.2,455.5) scale(1,1.2)" class="m107" text-anchor="middle" fill="#181818" >1</text>
</g>
<path d="M654.6 27.4 V25.4 A3.5 3.8 0 0 1 661.6 25.4 V27.4" stroke="#707070" fill="none" stroke-width="1.6" />
<rect x="653.2" y="26.6" width="9.8" height="8" fill="#707070" rx="2.6" />
<line x1="649.4" y1="40.3" x2="667.4" y2="40.3" stroke="#7c7c7c" stroke-width="1" />
<path d="M653.4 47.6 V59.4 L656.2 56.8 L658.4 61.4 L660 60.6 L657.8 56.2 L661.4 56 Z" stroke="none" fill="#606060" stroke-width="1" />
<line x1="658" y1="68" x2="658" y2="81" stroke="#808080" stroke-width="1.1" />
<rect x="655" y="71" width="6" height="4.6" fill="#ececec" stroke="#808080" stroke-width="1.1" />
<line x1="654.6" y1="78.6" x2="661.4" y2="78.6" stroke="#808080" stroke-width="1.1" />
<line x1="653" y1="89" x2="653" y2="101" stroke="#707070" stroke-width="1.3" />
<line x1="650.6" y1="92.6" x2="655.4" y2="92.6" stroke="#707070" stroke-width="1.1" />
<line x1="650.6" y1="95.6" x2="655.4" y2="95.6" stroke="#707070" stroke-width="1.1" />
<text x="656" y="101.6" class="s9" fill="#8c8c8c" >s</text>
<line x1="661.6" y1="101.8" x2="664.4" y2="101.8" stroke="#a0a0a0" stroke-width="1" />
<line x1="658" y1="110" x2="658" y2="119" stroke="#707070" stroke-width="1.2" />
<line x1="654.6" y1="114.2" x2="661.4" y2="114.2" stroke="#707070" stroke-width="1.2" />
<circle cx="658" cy="120.6" r="2.1" fill="#606060"/>
<line x1="649.4" y1="129.3" x2="667.4" y2="129.3" stroke="#7c7c7c" stroke-width="1" />
<path d="M652.6 140.6 H663.6 M657.2 140.6 V146.4 M654.6 144 H659.6" stroke="#7c7c7c" fill="none" stroke-width="1.1" />
<path d="M654.6 157.4 V164 M654.6 159.6 H660.4 M658.4 157.8 L660.8 159.6 L658.4 161.4" stroke="#7c7c7c" fill="none" stroke-width="1.1" />
<rect x="651.8" y="163.6" width="6" height="4.4" fill="#ececec" stroke="#7c7c7c" stroke-width="1.1" />
<path d="M654.6 180.6 H660.6 V184.6" stroke="#7c7c7c" fill="none" stroke-width="1.1" />
<rect x="656.6" y="184.8" width="6.4" height="4.6" fill="#ececec" stroke="#7c7c7c" stroke-width="1.1" />
<path d="M654.4 198.6 V211.4 M652.2 208.6 H656.6 M654.4 205.6 H662 M654.4 202 H659" stroke="#7c7c7c" fill="none" stroke-width="1.1" />
<rect x="659" y="199.8" width="5.4" height="3.8" fill="#ececec" stroke="#7c7c7c" stroke-width="1.1" />
<line x1="649.4" y1="218.6" x2="667.4" y2="218.6" stroke="#7c7c7c" stroke-width="1" />
<rect x="653.4" y="226" width="9" height="12.4" fill="#ececec" stroke="#606060" stroke-width="1.3" />
<line x1="651" y1="228.2" x2="653.4" y2="228.2" stroke="#606060" stroke-width="1.1" />
<line x1="651" y1="236.4" x2="653.4" y2="236.4" stroke="#606060" stroke-width="1.1" />
<line x1="662.4" y1="228.2" x2="664.6" y2="228.2" stroke="#606060" stroke-width="1.1" />
<text x="658" y="236" class="s8" text-anchor="middle" fill="#808080" >T</text>
<rect x="653.4" y="246.4" width="9" height="12.4" fill="#ececec" stroke="#606060" stroke-width="1.3" />
<line x1="651" y1="248.6" x2="653.4" y2="248.6" stroke="#606060" stroke-width="1.1" />
<line x1="651" y1="256.8" x2="653.4" y2="256.8" stroke="#606060" stroke-width="1.1" />
<line x1="662.4" y1="248.6" x2="664.6" y2="248.6" stroke="#606060" stroke-width="1.1" />
<text x="658" y="256.4" class="s8" text-anchor="middle" fill="#808080" >U</text>
<rect x="651.6" y="269.6" width="12.4" height="2.2" fill="#707070" />
<line x1="651.6" y1="273.8" x2="664" y2="273.8" stroke="#a0a0a0" stroke-width="1" />
<line x1="651.6" y1="276" x2="664" y2="276" stroke="#909090" stroke-width="1" />
<line x1="657.4" y1="272" x2="657.4" y2="276" stroke="#909090" stroke-width="1" />
<line x1="649.4" y1="286.3" x2="667.4" y2="286.3" stroke="#909090" stroke-width="1" />
<path d="M652.4 293.4 V304 M652.4 297.6 H663" stroke="#909090" fill="none" stroke-width="1" />
<path d="M656 296 V299 M659 296 V299 M662.8 296.4 Q664.4 297.6 662.8 298.8" stroke="#a0a0a0" fill="none" stroke-width="0.8" />
<rect x="651.6" y="316.4" width="13" height="6.6" fill="#f4f4f4" stroke="#808080" stroke-width="1" />
<text x="658" y="322" class="tiny3" text-anchor="middle" fill="#a0a0a0" >C≡lL</text>
<line x1="649.4" y1="333.6" x2="667.4" y2="333.6" stroke="#b0b0b0" stroke-width="1" />
<path d="M655.8 344.4 V355 M653.6 346 H658 M653.6 350 H658" stroke="#909090" fill="none" stroke-width="1" stroke-dasharray="1.4 1"/>
<rect x="654" y="347" width="3.6" height="2.4" fill="#ececec" stroke="#909090" stroke-width="0.8" />
<path d="M661.6 343.6 V348 M659.6 346 L661.6 348.6 L663.6 346 Z" stroke="#707070" fill="#707070" stroke-width="0.9" />
<rect x="660" y="343.4" width="3.4" height="1.6" fill="#808080" />
<line x1="647.2" y1="358" x2="670" y2="358" stroke="#8a8a8a" stroke-width="1" />
<line x1="647.2" y1="359.3" x2="670" y2="359.3" stroke="#fbfbfb" stroke-width="1.4" />
<path d="M650.4 377.4 H655.1999999999999 M660.4 377.4 H665.1999999999999 M655.1999999999999 371.0 V383.79999999999995 M660.4 371.0 V383.79999999999995" stroke="#6c6c6c" fill="none" stroke-width="1.4" />
<path d="M650.4 398 H655.1999999999999 M660.4 398 H665.1999999999999 M655.1999999999999 391.6 V404.4 M660.4 391.6 V404.4 M654.4 404 L661.4 392" stroke="#6c6c6c" fill="none" stroke-width="1.3" />
<rect x="654.1999999999999" y="411.40000000000003" width="8.4" height="12.4" fill="#ececec" stroke="#6c6c6c" stroke-width="1.4" />
<path d="M651.1999999999999 414.20000000000005 H654.1999999999999 M651.1999999999999 417.6 H654.1999999999999 M651.1999999999999 421.0 H654.1999999999999 M662.5999999999999 414.20000000000005 H664.8" stroke="#6c6c6c" fill="none" stroke-width="1.2" />
<path d="M653 434 V442 H663.4 M660 438.8 L663.6 442 L660 445.2" stroke="#6c6c6c" fill="none" stroke-width="1.3" />
<path d="M652 462.4 H661.6 V454 M658.2 457.4 L661.6 453.6 L665 457.4" stroke="#6c6c6c" fill="none" stroke-width="1.3" />
<line x1="647.2" y1="471.4" x2="670" y2="471.4" stroke="#8a8a8a" stroke-width="1" />
<line x1="647.2" y1="609.4" x2="671" y2="609.4" stroke="#606060" stroke-width="1.2" />
<rect x="672.4" y="593.8" width="587.4" height="15.6" fill="#e9e9e9" />
<rect x="731.8" y="594.4" width="453.8" height="14.4" fill="#b9b9b9" />
<path d="M683.2 597.6 L679 601.4 L683.2 605.2" stroke="#404040" fill="none" stroke-width="1.8" />
<path d="M1249 597.6 L1253.2 601.4 L1249 605.2" stroke="#404040" fill="none" stroke-width="1.8" />
<rect x="647.2" y="609.6" width="613" height="1.8" fill="#f4f4f4" />
<rect x="647.2" y="611.2" width="613" height="16.8" fill="#989898" />
<text x="649.2" y="625.6" class="st" fill="#101010" >Press F1 for help.</text>
<rect x="978.8" y="613.6" width="15.6" height="14" fill="#ebebeb" />
<rect x="997" y="613.8" width="34.6" height="13.8" fill="#9c9c9c" stroke="#c0c0c0" stroke-width="1" />
<rect x="1034.6" y="613" width="18" height="14.8" fill="#d4d4d4" />
<path d="M1043 613.4 L1050 620.4 L1043 627.4 L1036 620.4 Z" stroke="#404090" fill="#ffffff" stroke-width="1" />
<rect x="1042" y="616.8" width="2.2" height="7.2" fill="#101080" />
<rect x="1053.6" y="613.2" width="103.4" height="14.6" fill="#00d200" />
<text x="1055.6" y="625.8" class="st b" fill="#083008" >AUTO</text>
<rect x="1159.6" y="613.6" width="12.6" height="14" fill="#9c9c9c" stroke="#bdbdbd" stroke-width="1" />
<rect x="1174.2" y="613.6" width="27.8" height="14" fill="#9c9c9c" stroke="#bdbdbd" stroke-width="1" />
<text x="1188" y="625.4" class="st" text-anchor="middle" fill="#282828" >Abs</text>
<rect x="1205" y="613.6" width="35.2" height="14" fill="#9c9c9c" stroke="#bdbdbd" stroke-width="1" />
<text x="1222.6" y="625.4" class="st" text-anchor="middle" fill="#282828" >Rd</text>
<rect x="1243" y="612.4" width="17" height="15.6" fill="#e4e4e4" />
<path d="M1249 627.6 L1258.6 618 M1252 627.6 L1258.6 621 M1255 627.6 L1258.6 624" stroke="#8c8c8c" fill="none" stroke-width="1" />
<rect x="641.2" y="628" width="628" height="8" fill="#cbd7e6" />
<rect x="639" y="634.6" width="630" height="1.4" fill="#b4bcc8" />
<rect x="1259.4" y="8" width="1.8" height="620" fill="#e9e9e9" />
<rect x="1261.2" y="8" width="6.2" height="628" fill="#c4d1de" />
<rect x="1267.2" y="8" width="1.8" height="628" fill="#14284a" />
<g fill="none" stroke="#c4c4c4" stroke-width="1" stroke-opacity="0.55">
<text class="wmc" transform="translate(465.1,415.1) rotate(-30)" letter-spacing="5.2">西门子工业 技术论坛</text>
<text class="wml" transform="translate(479.2,437.7) rotate(-30)">support.industry.siemens.com/cs</text>
</g>
</svg>
</body></html>
